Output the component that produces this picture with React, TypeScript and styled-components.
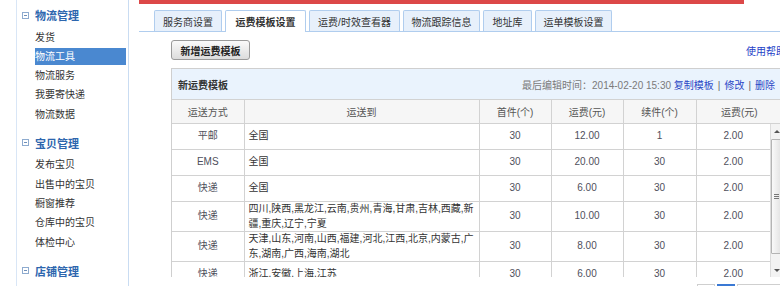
import React from 'react';
import styled, { createGlobalStyle } from 'styled-components';

const GlobalStyle = createGlobalStyle`
  html, body {
    margin: 0;
    padding: 0;
    background: #fff;
    overflow: hidden;
  }
  body {
    font-family: "Liberation Sans", "Noto Sans CJK SC", sans-serif;
    font-size: 10px;
    color: #333;
  }
`;

const Page = styled.div`
  display: flex;
  align-items: flex-start;
  width: 800px;
  height: 100vh;
`;

/* ---------- sidebar ---------- */

const Sidebar = styled.aside`
  box-sizing: border-box;
  width: 113px;
  height: 100vh;
  margin-left: 16px;
  padding-top: 5px;
  border-left: 1px solid #d9e6f6;
  border-right: 1px solid #c9dcf2;
  flex-shrink: 0;
`;

const Group = styled.div`
  margin-bottom: 9px;
`;

const GroupTitle = styled.div`
  display: flex;
  align-items: center;
  gap: 6px;
  height: 20px;
  padding-left: 5px;
  font-size: 11px;
  font-weight: bold;
  color: #2d66ae;
`;

const Fold = styled.span`
  position: relative;
  box-sizing: border-box;
  width: 7px;
  height: 7px;
  border: 1px solid #8eabcf;

  &::after {
    content: '';
    position: absolute;
    left: 1px;
    right: 1px;
    top: 2px;
    height: 1px;
    background: #6f8fb9;
  }
`;

const ItemList = styled.ul`
  list-style: none;
  margin: 2.5px 0 0;
  padding: 0;
`;

const Item = styled.li<{ $active?: boolean }>`
  height: 17.3px;
  line-height: 17.3px;
  padding: 1px 0 1px 14px;
  margin: 0 2px 0 4px;
  background-clip: content-box;
  background-color: ${(p) => (p.$active ? '#4a88d0' : 'transparent')};
  color: ${(p) => (p.$active ? '#fff' : '#333')};
  white-space: nowrap;
`;

/* ---------- main ---------- */

const Main = styled.main`
  width: 650px;
  margin-left: 10px;
  flex-shrink: 0;
`;

const RedBar = styled.div`
  width: 605px;
  height: 4px;
  background: #dc4848;
`;

const TabBar = styled.div`
  display: flex;
  align-items: flex-end;
  gap: 3px;
  height: 21px;
  margin-top: 6px;
  padding-left: 15px;
  border-bottom: 1px solid #b0cdee;
`;

const Tab = styled.div<{ $w: number; $active?: boolean }>`
  box-sizing: border-box;
  width: ${(p) => p.$w}px;
  height: ${(p) => (p.$active ? 22 : 21)}px;
  margin-bottom: ${(p) => (p.$active ? -1 : 0)}px;
  display: flex;
  align-items: center;
  justify-content: center;
  border: 1px solid #b0cdee;
  border-bottom: none;
  border-radius: 2px 2px 0 0;
  background: ${(p) => (p.$active ? '#fff' : '#e7f0fb')};
  font-weight: ${(p) => (p.$active ? 'bold' : 'normal')};
  color: #333;
  white-space: nowrap;
`;

const Content = styled.div`
  width: 612px;
  margin-left: 32px;
`;

const Toolbar = styled.div`
  display: flex;
  align-items: center;
  justify-content: space-between;
  margin-top: 8px;
  height: 20px;
`;

const AddButton = styled.button`
  box-sizing: border-box;
  width: 79px;
  height: 20px;
  padding: 0;
  border: 1px solid #9a9a9a;
  border-radius: 3px;
  background: linear-gradient(#fafafa, #dcdcdc);
  font-family: inherit;
  font-size: 10px;
  font-weight: bold;
  color: #222;
`;

const HelpLink = styled.a`
  margin-right: -3px;
  color: #1e3fc8;
  text-decoration: none;
  white-space: nowrap;
`;

const Panel = styled.section`
  margin-top: 8px;
  border: 1px solid #cfcfcf;
  border-bottom: none;
`;

const PanelHead = styled.div`
  display: flex;
  align-items: center;
  justify-content: space-between;
  height: 30px;
  padding: 0 7px 0 6px;
  background: #eaf3fd;
`;

const PanelTitle = styled.span`
  font-weight: bold;
  color: #333;
`;

const Meta = styled.span`
  color: #7a7a7a;
  white-space: nowrap;
`;

const MetaLink = styled.a`
  color: #2a47c6;
  text-decoration: none;
`;

const Sep = styled.span`
  margin: 0 4px;
  color: #666;
`;

const Grid = styled.table`
  width: 100%;
  table-layout: fixed;
  border-collapse: collapse;
  font-size: 10px;
`;

const Th = styled.th`
  height: 23px;
  padding: 0;
  font-weight: normal;
  color: #555;
  background: #f6f6f6;
  border-top: 1px solid #d2d2d2;
  border-right: 1px solid #d2d2d2;
  border-bottom: 1px solid #d2d2d2;

  &:last-child {
    border-right: none;
  }
`;

const BodyFrame = styled.div`
  display: flex;
  height: 153px;
  overflow: hidden;
`;

const BodyView = styled.div`
  flex: 1;
  min-width: 0;
  overflow: hidden;
`;

const Td = styled.td<{ $left?: boolean }>`
  height: 25px;
  padding: ${(p) => (p.$left ? '0 1px 0 4px' : '0 2px')};
  line-height: 14.5px;
  text-align: ${(p) => (p.$left ? 'left' : 'center')};
  color: ${(p) => (p.$left ? '#333' : '#4f4f5c')};
  border-right: 1px solid #d2d2d2;
  border-bottom: 1px solid #d2d2d2;

  &:last-child {
    border-right: none;
  }
`;

/* drawn scrollbar of the rows box */
const ScrollBar = styled.div`
  display: flex;
  flex-direction: column;
  width: 11px;
  flex-shrink: 0;
  background: #f3f3f3;
  border-left: 1px solid #dcdcdc;
`;

const Arrow = styled.div<{ $down?: boolean }>`
  display: flex;
  align-items: center;
  justify-content: center;
  height: 14px;
  flex-shrink: 0;

  &::before {
    content: '';
    border-left: 3px solid transparent;
    border-right: 3px solid transparent;
    ${(p) => (p.$down ? 'border-top: 3px solid #555;' : 'border-bottom: 3px solid #555;')}
  }
`;

const Track = styled.div`
  flex: 1;
  padding-top: 1px;
`;

const Thumb = styled.div`
  box-sizing: border-box;
  height: 115px;
  display: flex;
  align-items: center;
  justify-content: center;
  border: 1px solid #b4b4b4;
  border-radius: 1px;
  background: linear-gradient(to right, #f9f9f9, #e2e2e2);
`;

const Grip = styled.span`
  width: 5px;
  height: 5px;
  background: repeating-linear-gradient(#777 0 1px, transparent 1px 2px);
`;

const Pager = styled.div`
  display: flex;
  justify-content: flex-end;
  gap: 2px;
  margin-top: 7px;
`;

const PageBtn = styled.span<{ $current?: boolean }>`
  box-sizing: border-box;
  min-width: 18px;
  height: 18px;
  padding: 0 4px;
  display: flex;
  align-items: center;
  justify-content: center;
  border: 1px solid ${(p) => (p.$current ? '#3a79d4' : '#cfcfcf')};
  background: ${(p) => (p.$current ? '#3a79d4' : '#fff')};
  color: ${(p) => (p.$current ? '#fff' : '#555')};
`;

const menu = [
  { title: '物流管理', items: ['发货', '物流工具', '物流服务', '我要寄快递', '物流数据'], active: '物流工具' },
  { title: '宝贝管理', items: ['发布宝贝', '出售中的宝贝', '橱窗推荐', '仓库中的宝贝', '体检中心'] },
  { title: '店铺管理', items: [] as string[] },
];

const tabs = [
  { label: '服务商设置', w: 68 },
  { label: '运费模板设置', w: 81, active: true },
  { label: '运费/时效查看器', w: 91 },
  { label: '物流跟踪信息', w: 77 },
  { label: '地址库', w: 49 },
  { label: '运单模板设置', w: 77 },
];

const columns = ['运送方式', '运送到', '首件(个)', '运费(元)', '续件(个)', '运费(元)'];
const widths = [72, 235, 72, 72, 73];

const rows = [
  { way: '平邮', to: '全国', first: 30, fee: '12.00', next: 1, add: '2.00' },
  { way: 'EMS', to: '全国', first: 30, fee: '20.00', next: 30, add: '2.00' },
  { way: '快递', to: '全国', first: 30, fee: '6.00', next: 30, add: '2.00' },
  { way: '快递', to: '四川,陕西,黑龙江,云南,贵州,青海,甘肃,吉林,西藏,新疆,重庆,辽宁,宁夏', first: 30, fee: '10.00', next: 30, add: '2.00' },
  { way: '快递', to: '天津,山东,河南,山西,福建,河北,江西,北京,内蒙古,广东,湖南,广西,海南,湖北', first: 30, fee: '8.00', next: 30, add: '2.00' },
  { way: '快递', to: '浙江,安徽,上海,江苏', first: 30, fee: '6.00', next: 30, add: '2.00' },
];

const Cols = () => (
  <colgroup>
    {widths.map((w, i) => (
      <col key={i} style={{ width: w }} />
    ))}
    <col />
  </colgroup>
);

export default function App() {
  return (
    <>
      <GlobalStyle />
      <Page>
        <Sidebar>
          {menu.map((g) => (
            <Group key={g.title}>
              <GroupTitle>
                <Fold />
                {g.title}
              </GroupTitle>
              {g.items.length > 0 && (
                <ItemList>
                  {g.items.map((it) => (
                    <Item key={it} $active={it === g.active}>
                      {it}
                    </Item>
                  ))}
                </ItemList>
              )}
            </Group>
          ))}
        </Sidebar>

        <Main>
          <RedBar />
          <TabBar>
            {tabs.map((t) => (
              <Tab key={t.label} $w={t.w} $active={t.active}>
                {t.label}
              </Tab>
            ))}
          </TabBar>

          <Content>
            <Toolbar>
              <AddButton>新增运费模板</AddButton>
              <HelpLink href="#">使用帮助</HelpLink>
            </Toolbar>

            <Panel>
              <PanelHead>
                <PanelTitle>新运费模板</PanelTitle>
                <Meta>
                  最后编辑时间：2014-02-20 15:30 <MetaLink href="#">复制模板</MetaLink>
                  <Sep>|</Sep>
                  <MetaLink href="#">修改</MetaLink>
                  <Sep>|</Sep>
                  <MetaLink href="#">删除</MetaLink>
                </Meta>
              </PanelHead>

              <Grid>
                <Cols />
                <thead>
                  <tr>
                    {columns.map((c, i) => (
                      <Th key={i}>{c}</Th>
                    ))}
                  </tr>
                </thead>
              </Grid>

              <BodyFrame>
                <BodyView>
                  <Grid>
                    <Cols />
                    <tbody>
                      {rows.map((r, i) => (
                        <tr key={i}>
                          <Td>{r.way}</Td>
                          <Td $left>{r.to}</Td>
                          <Td>{r.first}</Td>
                          <Td>{r.fee}</Td>
                          <Td>{r.next}</Td>
                          <Td>{r.add}</Td>
                        </tr>
                      ))}
                    </tbody>
                  </Grid>
                </BodyView>
                <ScrollBar>
                  <Arrow />
                  <Track>
                    <Thumb>
                      <Grip />
                    </Thumb>
                  </Track>
                  <Arrow $down />
                </ScrollBar>
              </BodyFrame>
            </Panel>

            <Pager>
              <PageBtn>‹</PageBtn>
              <PageBtn $current>1</PageBtn>
              <PageBtn>下一页 ›</PageBtn>
            </Pager>
          </Content>
        </Main>
      </Page>
    </>
  );
}
